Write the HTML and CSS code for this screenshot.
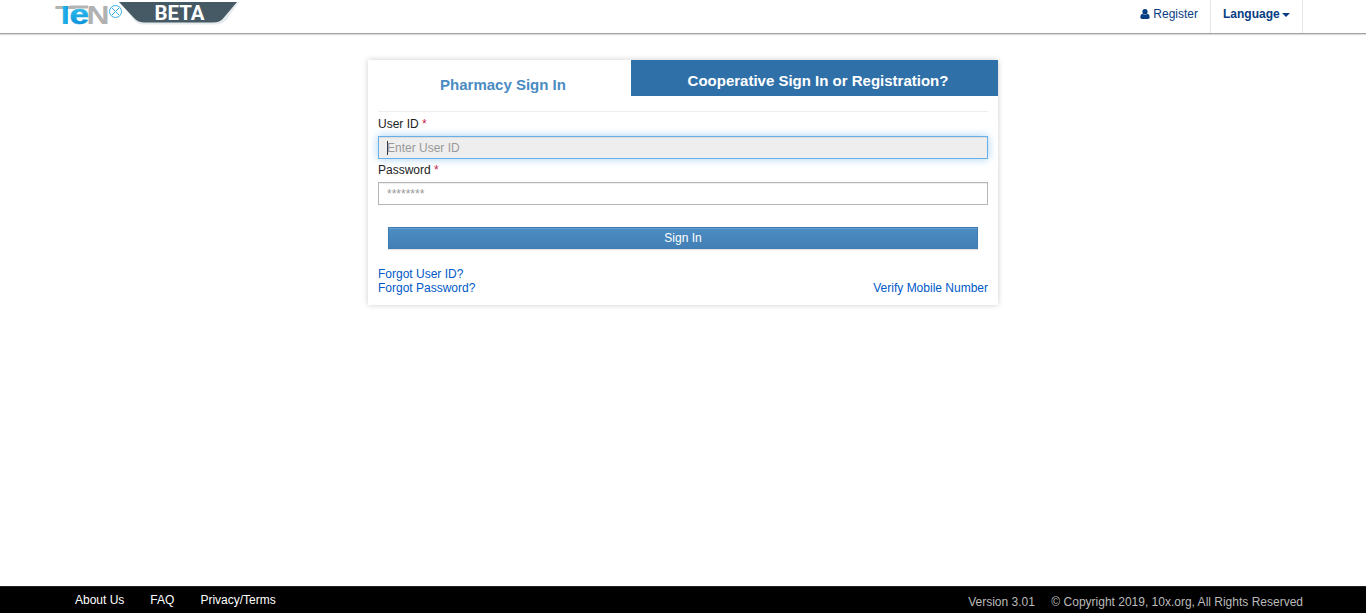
FILE: index.html
```html
<!DOCTYPE html>
<html lang="en">
<head>
<meta charset="utf-8">
<title>TEN X - Pharmacy Sign In</title>
<link rel="stylesheet" href="styles.css">
</head>
<body>
<header class="topbar">
  <a class="brand" href="#">
    <svg class="logo" width="184" height="33" viewBox="0 0 184 33" aria-label="TeNx Beta">
      <defs>
        <linearGradient id="stem" gradientUnits="userSpaceOnUse" x1="0" y1="5" x2="0" y2="24">
          <stop offset="0" stop-color="#35c4f0"/><stop offset="1" stop-color="#0a93dc"/>
        </linearGradient>
        <linearGradient id="tee" gradientUnits="userSpaceOnUse" x1="0" y1="0" x2="20" y2="0">
          <stop offset=".36" stop-color="#b4b4b4"/><stop offset=".4" stop-color="#29b8ec"/><stop offset=".64" stop-color="#129de0"/><stop offset=".66" stop-color="#b4b4b4"/>
        </linearGradient>
      </defs>
      <text class="logo-letter" x="0" y="24" textLength="20.500" lengthAdjust="spacingAndGlyphs" fill="url(#tee)">T</text>
      <path d="M15 5.500h18v3H15z" fill="#b4b4b4"/>
      <text class="logo-letter logo-e" x="14.500" y="23.700" textLength="19.500" lengthAdjust="spacingAndGlyphs" fill="url(#stem)" stroke="url(#stem)" stroke-width=".5">e</text>
      <text class="logo-letter" x="31.500" y="24" textLength="23" lengthAdjust="spacingAndGlyphs" fill="#b1b1b1">N</text>
      <circle cx="60.500" cy="11.500" r="6" fill="none" stroke="#38aee8"/>
      <path d="M57 8l7 7m0-7l-7 7" stroke="#38aee8"/>
      <path d="M66 2H184L172 19Q168 24.500 160 24.500H89Q82 24.500 78 19Z" fill="#e5eaec"/>
      <path d="M64 2H182L168.500 18Q165 22.500 158 22.500H90Q83 22.500 79 18Z" fill="#465a65"/>
      <text class="beta" x="99.500" y="19.500" textLength="50" lengthAdjust="spacingAndGlyphs">BETA</text>
    </svg>
  </a>
  <nav class="topnav">
    <a class="register" href="#">
      <svg width="10" height="10" viewBox="0 0 10 10"><ellipse cx="5" cy="2.800" rx="2.600" ry="2.800"/><path d="M2.400 4.800Q5 7 7.600 4.800Q9.700 5.200 9.700 8.200Q9.600 10 8 10H2Q.4 10 .3 8.200Q.3 5.200 2.400 4.800Z"/></svg>
      <span>Register</span>
    </a>
    <a class="language" href="#"><span>Language</span><i class="caret"></i></a>
  </nav>
</header>
<main class="content">
  <section class="card">
    <div class="tabs">
      <h1 class="tab">Pharmacy Sign In</h1>
      <a class="tab-alt" href="#"><span>Cooperative Sign In or Registration?</span></a>
    </div>
    <form class="form">
      <label class="label" for="user">User ID <b class="required">*</b></label>
      <div class="field focused"><i class="cursor"></i><input class="input" id="user" type="text" placeholder="Enter User ID"></div>
      <label class="label" for="password">Password <b class="required">*</b></label>
      <div class="field"><input class="input" id="password" type="password" placeholder="********"></div>
      <button class="submit" type="button">Sign In</button>
      <div class="links">
        <div class="forgot"><a href="#">Forgot User ID?</a><a href="#">Forgot Password?</a></div>
        <a href="#">Verify Mobile Number</a>
      </div>
    </form>
  </section>
</main>
<footer class="footer">
  <nav class="footer-links"><a href="#">About Us</a><a href="#">FAQ</a><a href="#">Privacy/Terms</a></nav>
  <div class="legal"><span>Version 3.01</span><span>© Copyright 2019, 10x.org, All Rights Reserved</span></div>
</footer>
</body>
</html>
```
FILE: styles.css
```css
* { box-sizing: border-box; }
body {
  display: flex;
  flex-direction: column;
  height: 100vh;
  margin: 0;
  overflow: hidden;
  background: #fff;
  color: #222;
  font: 12px/14px "Liberation Sans", Arial, sans-serif;
}
a { color: #0059c8; text-decoration: none; }
.topbar {
  display: flex;
  justify-content: space-between;
  height: 34px;
  padding: 0 63px 0 55px;
  border-bottom: 1px solid #a2a2a2;
  box-shadow: 0 1px 1px #ddd;
}
.brand, .logo { display: block; }
.logo { overflow: visible; }
.logo-letter { font: bold 26px "Liberation Sans", Arial, sans-serif; }
.logo-e { font-size: 28px; }
.beta { font: bold 20px Roboto, sans-serif; fill: #fff; }
.topnav { display: flex; height: 33px; }
.topnav a { display: flex; color: #073d82; padding-top: 7px; }
.register { gap: 3px; padding-right: 12px; }
.register svg { margin-top: 2px; fill: #073d82; }
.language {
  width: 93px;
  padding-left: 12px;
  border: solid #e5e5e5;
  border-width: 0 1px;
  font-weight: bold;
}
.caret {
  width: 8px;
  height: 4px;
  margin: 6px 0 0 2px;
  border: solid transparent;
  border-width: 4px 4px 0;
  border-top-color: #073d82;
}
.content { flex: 1; padding-top: 26px; }
.card {
  width: 630px;
  height: 245px;
  margin: 0 auto;
  box-shadow: 0 0 6px rgba(0, 0, 0, .2);
}
.tabs { display: flex; height: 51px; }
.tab {
  width: 263px;
  margin: 0;
  padding: 16px 0 0 7px;
  color: #4a8bc2;
  font-size: 15px;
  line-height: 18px;
  text-align: center;
}
.tab-alt {
  flex: 1;
  height: 36px;
  padding: 12px 0 0 7px;
  background: #2f70a9;
  color: #fff;
  font-size: 15px;
  font-weight: bold;
  line-height: 18px;
  text-align: center;
}
.form {
  display: flex;
  flex-direction: column;
  margin: 0 10px;
  padding-top: 5px;
  border-top: 1px solid #eee;
}
.label { height: 19px; }
.required { color: #c7254e; font-weight: normal; }
.field {
  display: flex;
  height: 23px;
  margin-bottom: 4px;
  padding: 0 8px;
  border: 1px solid #b5b5b5;
  box-shadow: inset 0 1px 1px rgba(0, 0, 0, .075);
}
.focused {
  border-color: #66afe9;
  background: #eee;
  box-shadow: inset 0 1px 1px rgba(0, 0, 0, .075), 0 0 8px rgba(102, 175, 233, .6);
}
.cursor { width: 1px; height: 14px; margin: 4px -1px 0 0; background: #333; }
.input {
  flex: 1;
  width: 100%;
  padding: 0;
  border: 0;
  outline: 0;
  background: none;
  font: inherit;
}
.input::placeholder { color: #999; opacity: 1; }
.submit {
  height: 22px;
  margin: 18px 10px;
  padding: 0;
  border: 1px solid #3e7cb2;
  border-bottom-color: #427cb0;
  background: linear-gradient(#4b8dc4, #427fb4);
  box-shadow: inset 0 1px #649dcb, 0 1px 1px #e3e3e3;
  color: #fff;
  font: inherit;
}
.links { display: flex; align-items: flex-end; justify-content: space-between; }
.forgot { display: flex; flex-direction: column; }
.footer {
  display: flex;
  justify-content: space-between;
  height: 27px;
  padding: 7px 63px 0 75px;
  border-top: 1px solid #222;
  background: #000;
  color: #bbb;
}
.footer-links { display: flex; gap: 26px; margin-top: -1px; }
.footer-links a { color: #fff; }
.legal { display: flex; gap: 16.5px; padding-top: 1px; }
```
